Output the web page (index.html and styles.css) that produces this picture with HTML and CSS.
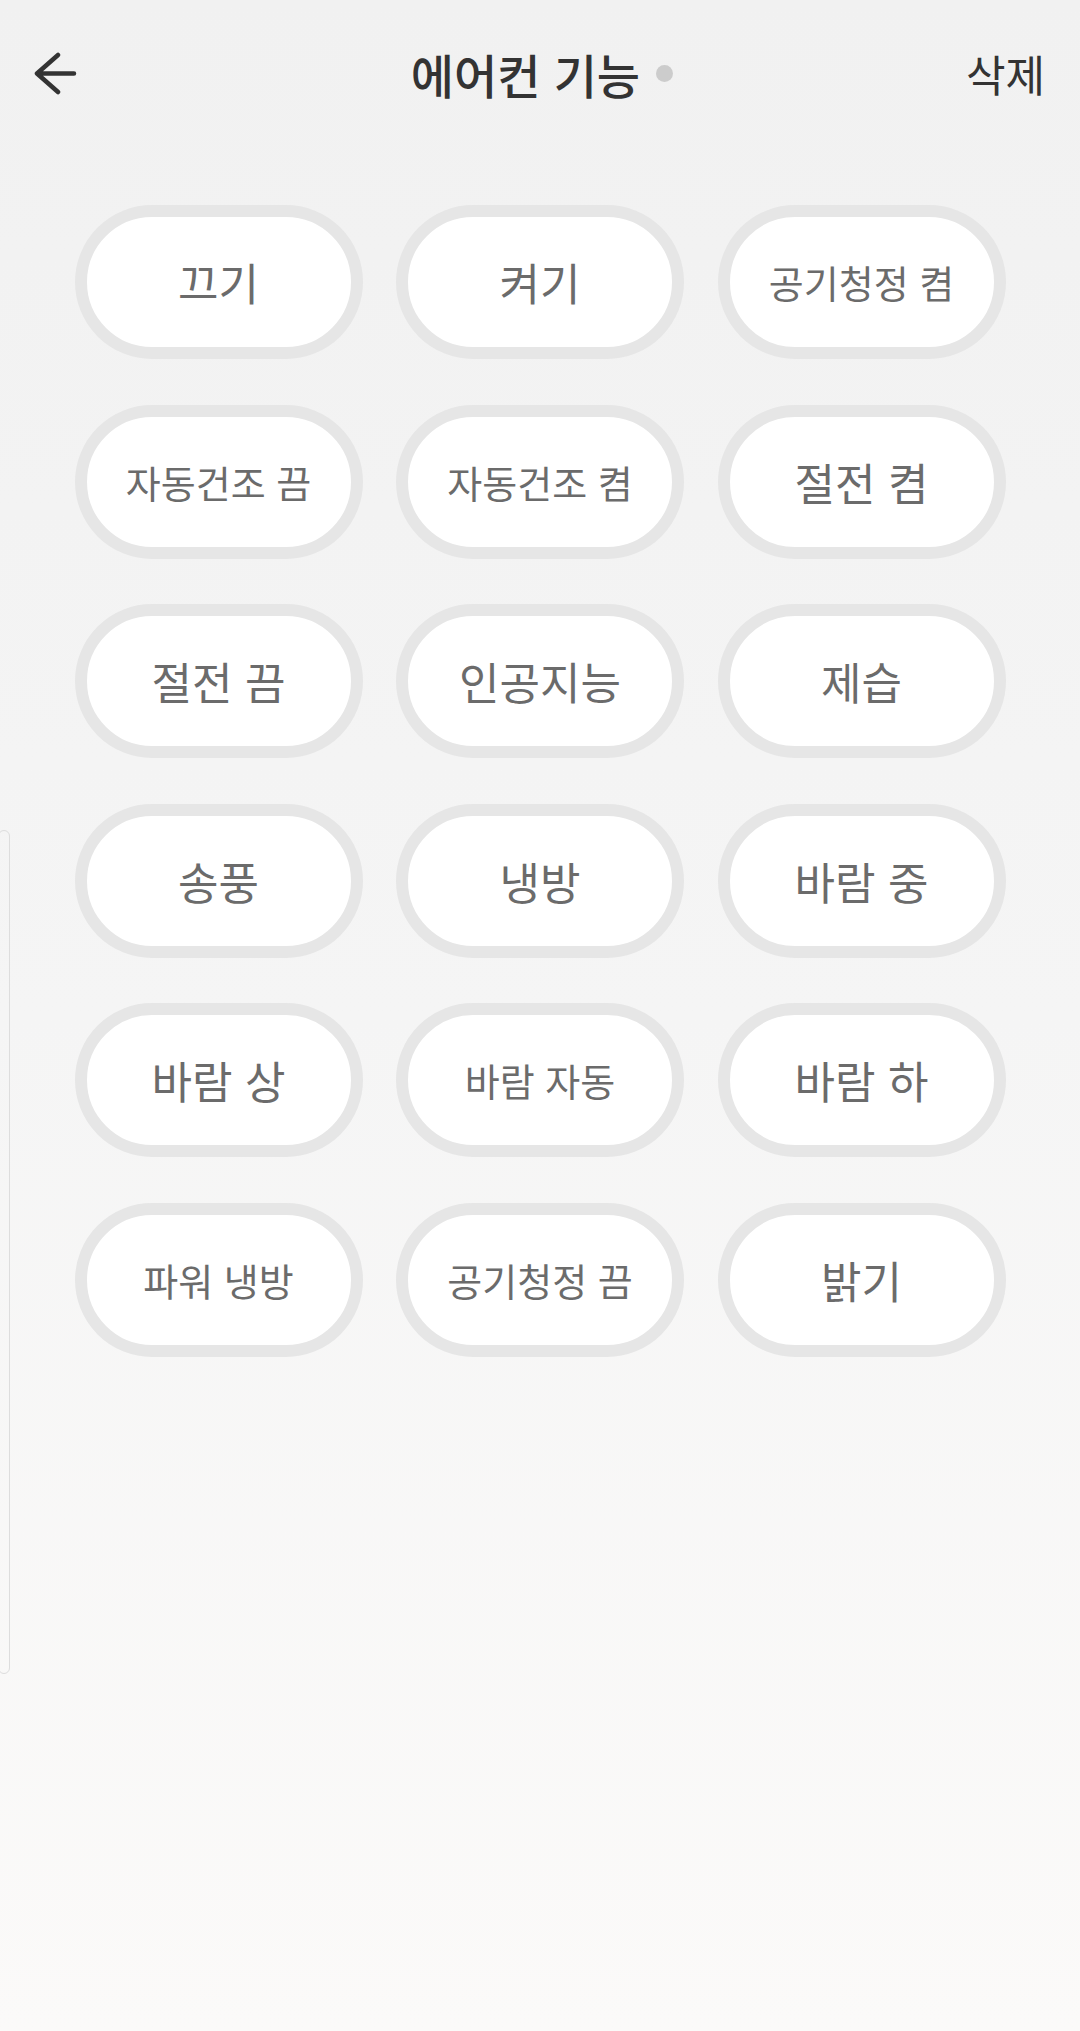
FILE: index.html
```html
<!DOCTYPE html>
<html lang="ko">
<head>
    <meta charset="UTF-8">
    <meta name="viewport" content="width=device-width, initial-scale=1.0">
    <title>에어컨 기능</title>
    <link rel="stylesheet" href="styles.css">
</head>
<body>
    <div class="page">
        <header class="top-bar">
            <button class="back-btn" aria-label="뒤로">
                <svg width="44" height="44" viewBox="0 0 44 44">
                    <path d="M24 4 L3 22.5 L24 41 M3 22.5 H40" fill="none" stroke="#333" stroke-width="4.5" stroke-linecap="round" stroke-linejoin="round"/>
                </svg>
            </button>
            <div class="title-wrap">
                <h1 class="title">에어컨 기능</h1>
                <span class="title-dot"></span>
            </div>
            <button class="delete-btn">삭제</button>
        </header>

        <!-- 기능 버튼 목록 -->
        <main class="func-grid">
            <button class="func-btn">끄기</button>
            <button class="func-btn">켜기</button>
            <button class="func-btn small">공기청정 켬</button>
            <button class="func-btn small">자동건조 끔</button>
            <button class="func-btn small">자동건조 켬</button>
            <button class="func-btn">절전 켬</button>
            <button class="func-btn">절전 끔</button>
            <button class="func-btn">인공지능</button>
            <button class="func-btn">제습</button>
            <button class="func-btn">송풍</button>
            <button class="func-btn">냉방</button>
            <button class="func-btn">바람 중</button>
            <button class="func-btn">바람 상</button>
            <button class="func-btn small">바람 자동</button>
            <button class="func-btn">바람 하</button>
            <button class="func-btn small">파워 냉방</button>
            <button class="func-btn small">공기청정 끔</button>
            <button class="func-btn">밝기</button>
        </main>

        <div class="side-handle"></div>
    </div>
</body>
</html>
```

FILE: styles.css
```css
/* 에어컨 기능 화면 */
html, body {
    margin: 0;
    padding: 0;
}
body {
    font-family: "Noto Sans CJK KR", "Noto Sans", sans-serif;
    background: linear-gradient(to bottom, #f1f1f1 0%, #f5f5f5 50%, #fbfaf9 100%);
    min-height: 2031px;
    color: #333;
}
.page {
    position: relative;
    min-height: 2031px;
}
button {
    font-family: inherit;
    border: none;
    background: none;
    padding: 0;
    cursor: pointer;
}
.top-bar {
    height: 146px;
    display: flex;
    align-items: center;
    justify-content: space-between;
    padding: 0 35px 0 34px;
}
.back-btn {
    width: 44px;
    height: 44px;
    display: flex;
}
.title-wrap {
    display: flex;
    align-items: center;
    gap: 16px;
    margin-left: 40px;
}
.title {
    margin: 0;
    font-size: 47px;
    font-weight: 500;
    color: #333;
    line-height: 1;
}
.title-dot {
    width: 17px;
    height: 17px;
    border-radius: 50%;
    background-color: #cccccc;
}
.delete-btn {
    font-size: 43px;
    color: #333;
    line-height: 1;
}
.func-grid {
    display: grid;
    grid-template-columns: repeat(3, 288px);
    column-gap: 33.5px;
    row-gap: 45.5px;
    justify-content: center;
    margin-top: 59px;
}
.func-btn {
    height: 154px;
    box-sizing: border-box;
    border: 12px solid #e6e6e6;
    border-radius: 77px;
    background-color: #ffffff;
    color: #6b6b6b;
    font-size: 44px;
    line-height: 1;
    white-space: nowrap;
}
.func-btn.small {
    font-size: 38px;
}
/* 왼쪽 서랍 손잡이 */
.side-handle {
    position: absolute;
    left: -2px;
    top: 830px;
    width: 10px;
    height: 842px;
    border: 1.5px solid #dddddd;
    border-radius: 6px;
}
```
